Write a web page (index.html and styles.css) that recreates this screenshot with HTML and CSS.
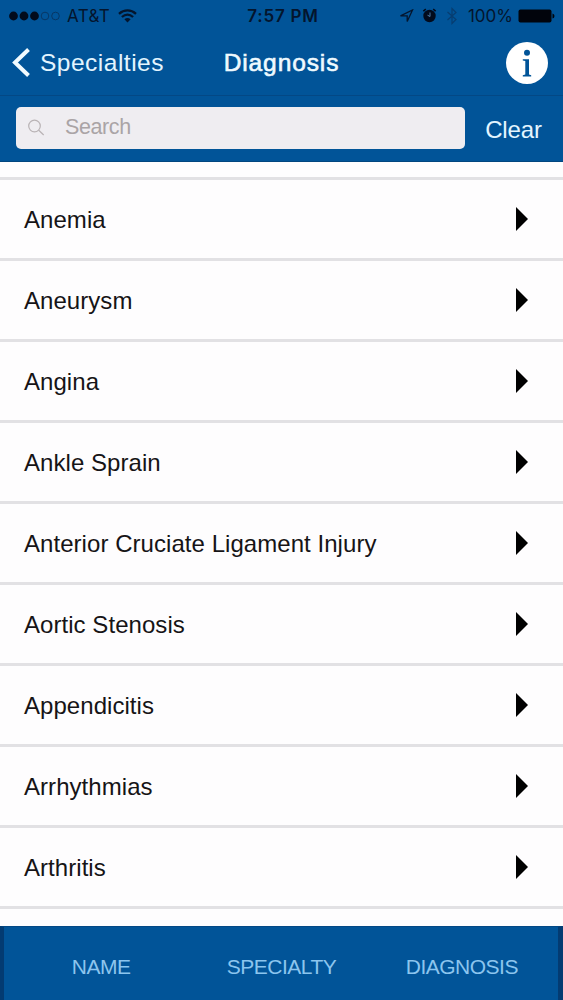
FILE: index.html
```html
<!DOCTYPE html>
<html lang="en">
<head>
    <meta charset="UTF-8">
    <meta name="viewport" content="width=device-width, initial-scale=1.0">
    <title>Diagnosis</title>
    <link rel="stylesheet" href="styles.css">
</head>
<body>
    <div class="screen">
        <!-- Status Bar -->
        <div class="status-bar">
            <div class="status-left">
                <svg class="signal" width="52" height="12" viewBox="0 0 52 12">
                    <circle cx="4.5" cy="6" r="4.4"/>
                    <circle cx="15" cy="6" r="4.4"/>
                    <circle cx="25.5" cy="6" r="4.4"/>
                    <circle class="empty" cx="36" cy="6" r="3.8"/>
                    <circle class="empty" cx="46.5" cy="6" r="3.8"/>
                </svg>
                <span class="carrier">AT&amp;T</span>
                <svg class="wifi" width="19" height="14" viewBox="0 0 19 14">
                    <path d="M1 4.8C6 .3 13 .3 18 4.8M3.9 8C7.3 5 11.7 5 15.1 8"/>
                    <path class="wifi-dot" d="M6.4 10.3Q9.5 7.8 12.6 10.3L9.5 13.5z"/>
                </svg>
            </div>
            <span class="time">7:57 PM</span>
            <div class="status-right">
                <svg class="location" width="15" height="14" viewBox="0 0 15 14">
                    <path d="M13.5 1L8.2 12.5V6.8H1.5z"/>
                </svg>
                <svg class="alarm" width="15" height="15" viewBox="0 0 15 15">
                    <circle cx="7.5" cy="8" r="6.2"/>
                    <path class="bells" d="M1.3 3.2L3.8 1.2M13.7 3.2L11.2 1.2"/>
                    <path class="hands" d="M8 4.5V8.5L5.5 7.2"/>
                </svg>
                <svg class="bluetooth" width="12" height="18" viewBox="0 0 12 18">
                    <path d="M1.5 5L10 12.5L6 16.5V1.5L10 5.5L1.5 13"/>
                </svg>
                <span class="percent">100%</span>
                <svg class="battery" width="38" height="14" viewBox="0 0 38 14">
                    <rect x="1.5" y=".5" width="33" height="13" rx="2"/>
                    <path d="M35.500 4.5Q37.5 5 37.5 7T35.500 9.5z"/>
                </svg>
            </div>
        </div>

        <!-- Navigation Bar -->
        <div class="navbar">
            <a class="back" href="#">
                <svg width="18" height="30" viewBox="0 0 18 30">
                    <path d="M16.5 1.5L3 14.5L16.500 27.500"/>
                </svg>
                <span>Specialties</span>
            </a>
            <h1>Diagnosis</h1>
            <a class="info" href="#">
                <svg width="42" height="42" viewBox="0 0 42 42">
                    <circle class="disc" cx="21" cy="21" r="21"/>
                    <circle cx="21" cy="10.8" r="3"/>
                    <path d="M16.8 17.3H23V32.5L25.2 33.2V34.5H16.8V33.2L19.3 32.5V19L16.8 18.5z"/>
                </svg>
            </a>
        </div>

        <!-- Search -->
        <div class="search-section">
            <div class="search-bar">
                <svg width="18" height="18" viewBox="0 0 18 18">
                    <circle cx="6.5" cy="7" r="5.8"/>
                    <path d="M10.7 11.2L15.7 16"/>
                </svg>
                <input type="text" placeholder="Search">
            </div>
            <a class="clear" href="#">Clear</a>
        </div>

        <ul class="list">
            <li><span>Anemia</span><i class="arrow"></i></li>
            <li><span>Aneurysm</span><i class="arrow"></i></li>
            <li><span>Angina</span><i class="arrow"></i></li>
            <li><span>Ankle Sprain</span><i class="arrow"></i></li>
            <li><span>Anterior Cruciate Ligament Injury</span><i class="arrow"></i></li>
            <li><span>Aortic Stenosis</span><i class="arrow"></i></li>
            <li><span>Appendicitis</span><i class="arrow"></i></li>
            <li><span>Arrhythmias</span><i class="arrow"></i></li>
            <li><span>Arthritis</span><i class="arrow"></i></li>
        </ul>

        <!-- Bottom Tabs -->
        <div class="tabs">
            <a href="#">NAME</a>
            <a href="#">SPECIALTY</a>
            <a href="#">DIAGNOSIS</a>
        </div>
    </div>
</body>
</html>
```

FILE: styles.css
```css
* {
    box-sizing: border-box;
}
body {
    margin: 0;
    font-family: "Liberation Sans", Arial, sans-serif;
    background-color: #fefdfe;
}
a {
    color: #e3f5ff;
    text-decoration: none;
}
svg {
    display: block;
    flex: none;
}
.screen {
    display: flex;
    flex-direction: column;
    width: 563px;
    height: 1000px;
    overflow: hidden;
}
.status-bar {
    display: grid;
    grid-template-columns: 1fr auto 1fr;
    align-items: center;
    height: 31px;
    padding: 0 8px 0 9px;
    background-color: #015498;
    color: #04152d;
    font-family: Inter, sans-serif;
    font-size: 17px;
}
.status-left, .status-right {
    display: flex;
    align-items: center;
}
.status-right {
    justify-content: flex-end;
}
.signal {
    fill: #020b1c;
}
.signal .empty {
    fill: none;
    stroke: #073765;
    stroke-width: 1;
}
.carrier {
    width: 44px;
    margin: 0 7px 0 6px;
    letter-spacing: 0.4px;
}
.wifi {
    fill: none;
    stroke: #04152d;
    stroke-width: 2.3;
}
.wifi-dot {
    fill: #04152d;
    stroke: none;
}
.time {
    padding-left: 2px;
    font-weight: 600;
    letter-spacing: 0.8px;
}
.location {
    margin-right: 8px;
    fill: none;
    stroke: #04152d;
    stroke-width: 1.3;
}
.alarm {
    margin-right: 9px;
    fill: #020b1c;
}
.bells {
    stroke: #020b1c;
    stroke-width: 1.5;
}
.hands {
    fill: none;
    stroke: #4d7da8;
    stroke-width: 1;
}
.bluetooth {
    margin-right: 10px;
    fill: none;
    stroke: #073d70;
    stroke-width: 1.2;
}
.percent {
    margin-right: 4px;
}
.battery {
    fill: #01040c;
}
.navbar {
    display: grid;
    grid-template-columns: 1fr auto 1fr;
    align-items: center;
    height: 65px;
    padding: 0 15px 0 12px;
    background-color: #015498;
    border-bottom: 1px solid #034885;
}
.back {
    display: flex;
    align-items: center;
    gap: 10px;
    font-size: 24.5px;
    letter-spacing: 0.5px;
}
.back svg {
    fill: none;
    stroke: #f2fbff;
    stroke-width: 4;
}
h1 {
    margin: 0;
    padding-left: 3px;
    color: #effaff;
    font-size: 24.5px;
    font-weight: normal;
    letter-spacing: 0.9px;
    -webkit-text-stroke: 0.6px #effaff;
}
.info {
    justify-self: end;
    fill: #015498;
}
.info .disc {
    fill: #fff;
}
.search-section {
    display: flex;
    align-items: center;
    justify-content: space-between;
    height: 66px;
    padding: 0 21px 0 16px;
    background-color: #015498;
    border-bottom: 1px solid #02467f;
}
.search-bar {
    display: flex;
    align-items: center;
    width: 449px;
    height: 42px;
    margin-bottom: 1px;
    padding: 0 12px;
    background-color: #efedf1;
    border-radius: 5px;
}
.search-bar svg {
    fill: none;
    stroke: #b9b3b5;
    stroke-width: 1.2;
}
.search-bar input {
    flex: 1;
    margin: 0 0 2px 19px;
    padding: 0;
    border: none;
    outline: none;
    background: none;
    font-family: inherit;
    font-size: 21.5px;
    letter-spacing: -0.4px;
}
.search-bar input::placeholder {
    color: #aaa4a6;
}
.clear {
    padding-top: 2px;
    font-size: 24px;
    letter-spacing: -0.1px;
}
.list {
    flex: 1;
    margin: 0;
    padding: 15px 0 0;
    list-style: none;
}
.list li {
    display: flex;
    align-items: center;
    justify-content: space-between;
    height: 81px;
    padding: 0 35px 0 24px;
    border-top: 3px solid #e2e1e4;
    color: #161416;
    font-size: 24px;
    letter-spacing: 0.05px;
}
.list li:last-child {
    height: 84px;
    border-bottom: 3px solid #e2e1e4;
}
.list span {
    padding-top: 1px;
}
.arrow {
    border-left: 12px solid #000;
    border-top: 12px solid transparent;
    border-bottom: 12px solid transparent;
}
.tabs {
    display: grid;
    grid-template-columns: repeat(3, 1fr);
    align-items: center;
    height: 74px;
    padding: 7px 6px 0 7px;
    background-color: #015498;
    border-top: 1px solid #034885;
    border-left: 4px solid #033b72;
    border-right: 5px solid #033b72;
}
.tabs a {
    color: #8cc5ee;
    font-size: 21px;
    letter-spacing: -0.5px;
    text-align: center;
}
```
